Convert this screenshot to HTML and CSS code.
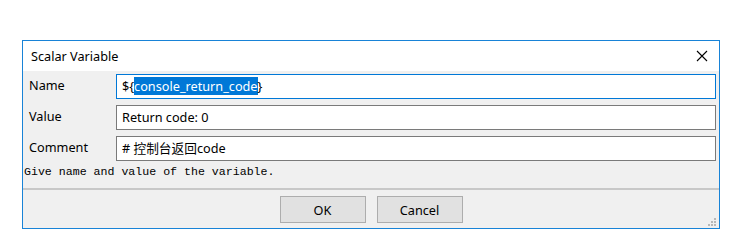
FILE: index.html
```html
<!DOCTYPE html>
<html lang="zh-CN">
<head>
    <meta charset="UTF-8">
    <title>Scalar Variable</title>
    <link rel="stylesheet" href="styles.css">
</head>
<body>
    <div class="dialog">
        <div class="titlebar">
            <span class="title">Scalar Variable</span>
            <svg class="close" width="12" height="12" viewBox="0 0 12 12">
                <path d="M1 1 L11 11 M11 1 L1 11" stroke="#000" stroke-width="1.1" fill="none"/>
            </svg>
        </div>
        <div class="content">
            <div class="row">
                <label>Name</label>
                <div class="field focused">$<span class="sel-wrap">{<span class="sel">console_return_code</span>}</span></div>
            </div>
            <div class="row">
                <label>Value</label>
                <div class="field">Return code: 0</div>
            </div>
            <div class="row">
                <label>Comment</label>
                <div class="field"># 控制台返回code</div>
            </div>
            <div class="help">Give name and value of the variable.</div>
        </div>
        <div class="footer">
            <button class="btn">OK</button>
            <button class="btn">Cancel</button>
            <span class="grip">
                <svg width="10" height="10" viewBox="0 0 10 10">
                    <rect x="7" y="1" width="2" height="2" fill="#b8b8b8"/>
                    <rect x="4" y="4" width="2" height="2" fill="#b8b8b8"/>
                    <rect x="7" y="4" width="2" height="2" fill="#b8b8b8"/>
                    <rect x="1" y="7" width="2" height="2" fill="#b8b8b8"/>
                    <rect x="4" y="7" width="2" height="2" fill="#b8b8b8"/>
                    <rect x="7" y="7" width="2" height="2" fill="#b8b8b8"/>
                </svg>
            </span>
        </div>
    </div>
</body>
</html>
```

FILE: styles.css
```css
body {
    margin: 0;
    background-color: #fff;
    font-family: "Noto Sans", "Noto Sans CJK SC", sans-serif;
    font-size: 12.7px;
    color: #000;
}
.dialog {
    margin: 40px 0 0 22px;
    width: 696px;
    height: 187px;
    border: 1px solid #1883d7;
    background-color: #f0f0f0;
    display: flex;
    flex-direction: column;
}
.titlebar {
    height: 30px;
    background-color: #fff;
    display: flex;
    align-items: center;
    justify-content: space-between;
    padding: 0 10px 0 8px;
}
.title {
    margin-top: -1px;
}
.close {
    margin-right: 1px;
}
.content {
    padding: 3px 3px 0 1px;
}
.row {
    display: flex;
    align-items: flex-start;
    margin-bottom: 6px;
}
.row label {
    width: 86px;
    padding: 2px 0 0 5px;
    box-sizing: border-box;
}
.field {
    flex: 1;
    height: 25px;
    box-sizing: border-box;
    border: 1px solid #7a7a7a;
    background-color: #fff;
    padding: 0 0 0 5px;
    line-height: 23px;
    margin-left: 6px;
    white-space: nowrap;
}
.field.focused {
    border-color: #0078d7;
}
.sel {
    background-color: #0078d7;
    color: #fff;
}
.help {
    font-family: "Liberation Mono", monospace;
    font-size: 11.6px;
    line-height: 16px;
    margin-top: -3px;
    padding-bottom: 8px;
}
.footer {
    flex: 1;
    border-top: 2px solid #c8c8c8;
    display: flex;
    justify-content: center;
    align-items: flex-start;
    padding-top: 6px;
    gap: 11px;
    position: relative;
}
.btn {
    width: 86px;
    height: 27px;
    border: 1px solid #adadad;
    background-color: #e1e1e1;
    font-family: "Noto Sans", sans-serif;
    font-size: 12.7px;
    color: #000;
    padding: 0;
}
.grip {
    position: absolute;
    right: 2px;
    bottom: 1px;
    line-height: 0;
}
```
